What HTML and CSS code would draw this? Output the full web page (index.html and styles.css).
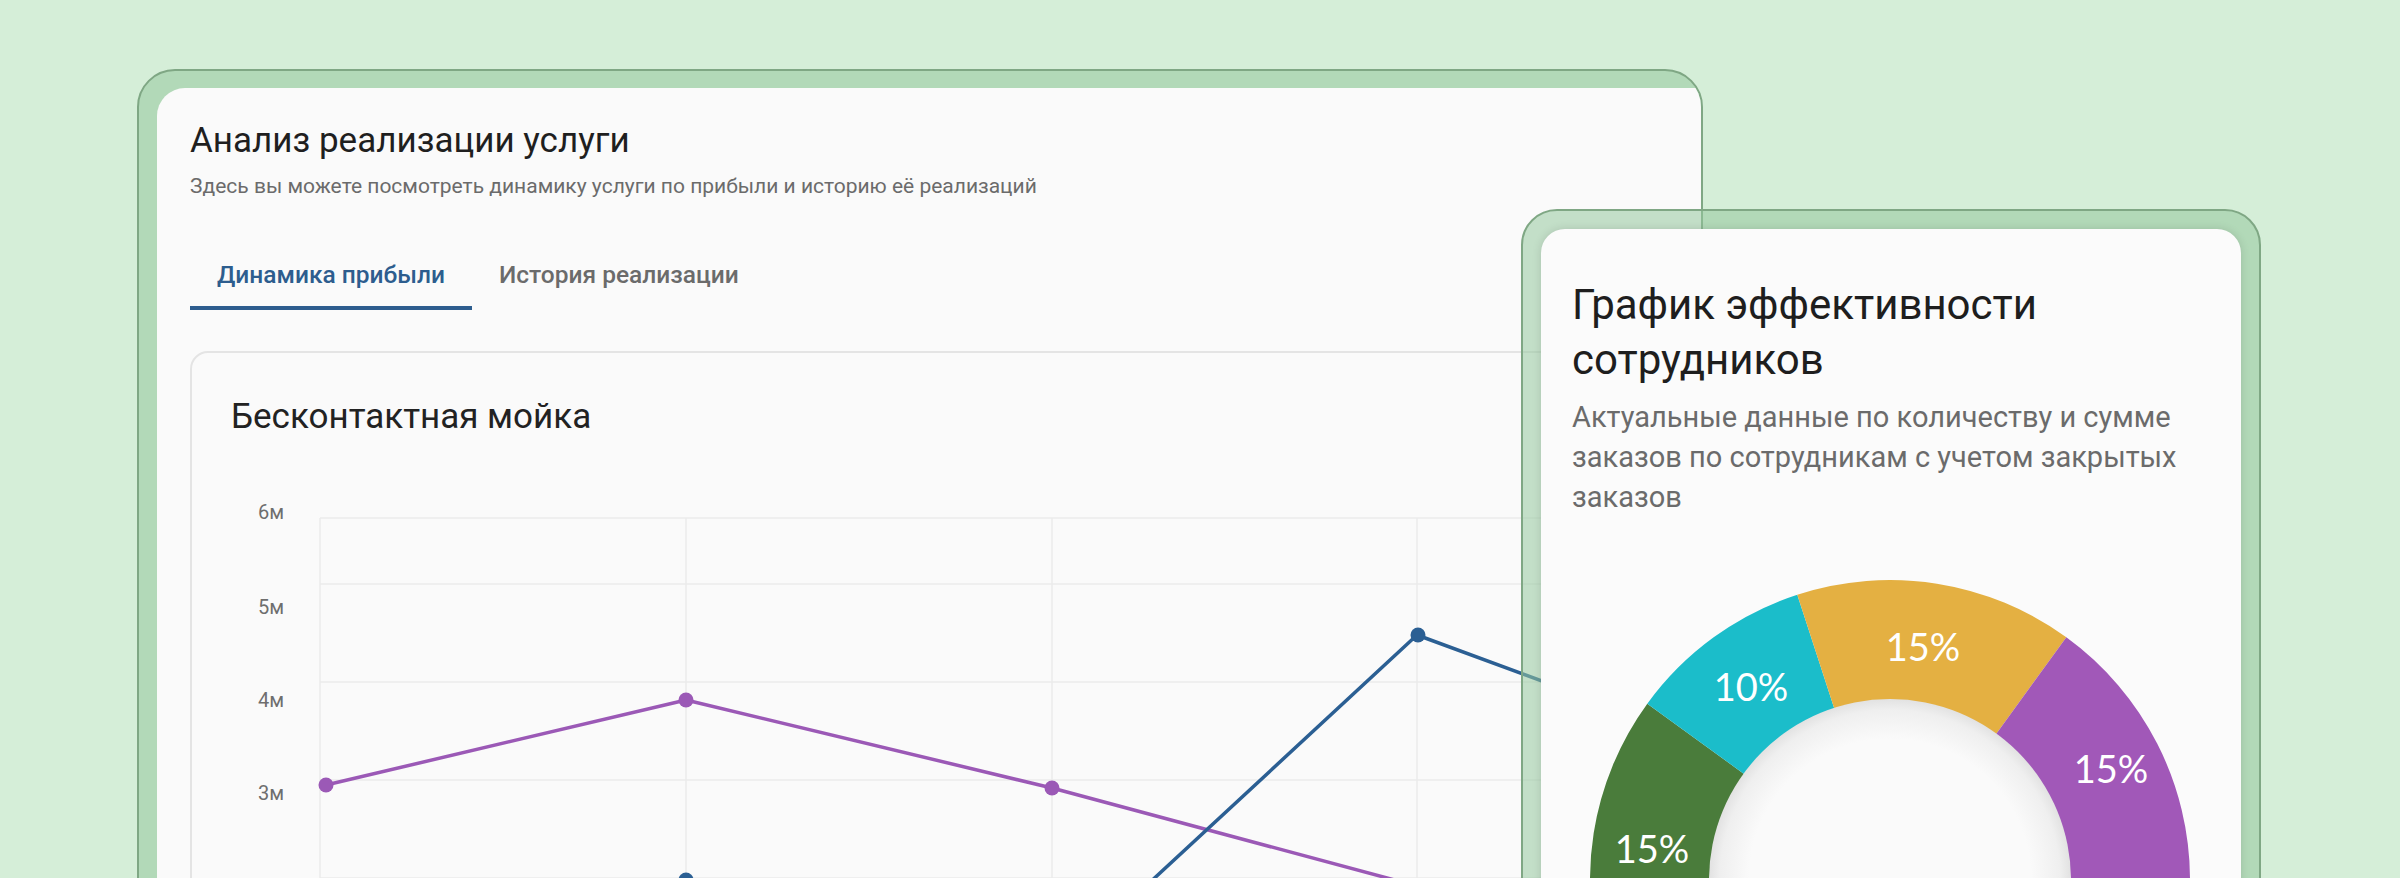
FILE: index.html
```html
<!DOCTYPE html>
<html lang="ru">
<head>
<meta charset="utf-8">
<title>Анализ реализации услуги</title>
<link rel="stylesheet" href="styles.css">
</head>
<body>
<div class="page">
  <section class="frame frame-main">
    <div class="panel panel-main">
      <h1 class="title">Анализ реализации услуги</h1>
      <p class="subtitle">Здесь вы можете посмотреть динамику услуги по прибыли и историю её реализаций</p>
      <nav class="tabs">
        <span class="tab tab-active">Динамика прибыли</span>
        <span class="tab">История реализации</span>
      </nav>
      <div class="chart-card">
        <h2 class="chart-title">Бесконтактная мойка</h2>
        <svg class="chart" width="1474" height="440" viewBox="192 460 1474 440">
          <g class="grid">
            <line x1="320" y1="518" x2="1666" y2="518"/>
            <line x1="320" y1="584" x2="1666" y2="584"/>
            <line x1="320" y1="682" x2="1666" y2="682"/>
            <line x1="320" y1="780" x2="1666" y2="780"/>
            <line x1="320" y1="878" x2="1666" y2="878"/>
            <line x1="320" y1="518" x2="320" y2="900"/>
            <line x1="686" y1="518" x2="686" y2="900"/>
            <line x1="1052" y1="518" x2="1052" y2="900"/>
            <line x1="1417" y1="518" x2="1417" y2="900"/>
          </g>
          <g class="axis">
            <text x="258" y="519">6м</text>
            <text x="258" y="614">5м</text>
            <text x="258" y="707">4м</text>
            <text x="258" y="800">3м</text>
          </g>
          <polyline class="series series-purple" points="326,785 686,700 1052,788 1417,886 1783,900"/>
          <polyline class="series series-blue" points="686,880 1052,973 1417,635 1783,770"/>
          <g class="dots-purple">
            <circle cx="326" cy="785" r="7.5"/>
            <circle cx="686" cy="700" r="7.5"/>
            <circle cx="1052" cy="788" r="7.5"/>
          </g>
          <g class="dots-blue">
            <circle cx="686" cy="880" r="7.5"/>
            <circle cx="1418" cy="635" r="7.5"/>
          </g>
        </svg>
      </div>
    </div>
  </section>

  <section class="frame frame-side">
    <div class="panel panel-side">
      <h2 class="side-title">График эффективности сотрудников</h2>
      <p class="side-desc">Актуальные данные по количеству и сумме заказов по сотрудникам с учетом закрытых заказов</p>
      <svg class="donut" width="638" height="400" viewBox="1572 540 638 400">
        <defs>
          <radialGradient id="hole" cx="50%" cy="50%" r="50%">
            <stop offset="0.78" stop-color="#fafafa"/>
            <stop offset="0.94" stop-color="#efefef"/>
            <stop offset="1" stop-color="#e2e2e2"/>
          </radialGradient>
        </defs>
        <path class="seg-green" d="M1604.68 972.71 A300 300 0 0 1 1647.29 703.66 L1744.38 774.20 A180 180 0 0 0 1718.81 935.62 Z"/>
        <path class="seg-cyan" d="M1647.29 703.66 A300 300 0 0 1 1797.29 594.68 L1834.38 708.81 A180 180 0 0 0 1744.38 774.20 Z"/>
        <path class="seg-yellow" d="M1797.29 594.68 A300 300 0 0 1 2066.34 637.29 L1995.80 734.38 A180 180 0 0 0 1834.38 708.81 Z"/>
        <path class="seg-purple" d="M2066.34 637.29 A300 300 0 0 1 2190 880 L2070 880 A180 180 0 0 0 1995.80 734.38 Z"/>
        <path class="seg-blue" d="M2190 880 A300 300 0 0 1 2066.34 1122.71 L1995.80 1025.62 A180 180 0 0 0 2070 880 Z"/>
        <path class="seg-red" d="M2066.34 1122.71 A300 300 0 0 1 1797.29 1165.32 L1834.38 1051.19 A180 180 0 0 0 1995.80 1025.62 Z"/>
        <path class="seg-grey" d="M1797.29 1165.32 A300 300 0 0 1 1604.68 972.71 L1718.81 935.62 A180 180 0 0 0 1834.38 1051.19 Z"/>
        <circle cx="1890" cy="880" r="181" fill="url(#hole)"/>
        <g class="pct">
          <text x="1923" y="661">15%</text>
          <text x="1751" y="701">10%</text>
          <text x="2111" y="783">15%</text>
          <text x="1652" y="863">15%</text>
        </g>
      </svg>
    </div>
  </section>
</div>
</body>
</html>
```

FILE: styles.css
```css
html, body {
  margin: 0;
  height: 878px;
  overflow: hidden;
}

body {
  background: #d5eed8;
  font-family: Roboto, "Liberation Sans", sans-serif;
}

.page {
  position: relative;
  padding: 69px 0 0 137px;
}

.frame {
  box-sizing: border-box;
  border: 2px solid #7fa784;
  background: rgba(150, 200, 158, 0.55);
  overflow: hidden;
}

.frame-main {
  width: 1566px;
  height: 860px;
  border-radius: 38px;
  padding: 17px 0 0 18px;
}

.panel {
  box-sizing: border-box;
  height: 100%;
}

.panel-main {
  background: #fafafa;
  border-top-left-radius: 28px;
  padding: 32px 33px 0 33px;
}

.title {
  margin: 0;
  font-size: 35px;
  line-height: 42px;
  font-weight: 400;
  color: #1f1f1f;
}

.subtitle {
  margin: 11px 0 0;
  font-size: 21px;
  line-height: 26px;
  color: #6b6b6b;
}

.tabs {
  display: flex;
  margin-top: 45px;
}

.tab {
  padding: 16px 27px;
  font-size: 24.5px;
  line-height: 30px;
  font-weight: 500;
  color: #6b6b6b;
  border-bottom: 4px solid transparent;
}

.tab-active {
  color: #2d5d8e;
  border-bottom-color: #2d5d8e;
}

.chart-card {
  margin-top: 41px;
  height: 600px;
  border: 2px solid #e4e4e4;
  border-radius: 18px;
  background: #fafafa;
}

.chart-title {
  margin: 0;
  padding: 44px 0 0 39px;
  font-size: 35px;
  line-height: 40px;
  font-weight: 400;
  color: #222222;
}

.chart {
  display: block;
  margin-top: 23px;
}

.grid line {
  stroke: #ebebeb;
  stroke-width: 1.5;
}

.axis text {
  font-family: Roboto, "Liberation Sans", sans-serif;
  font-size: 20px;
  fill: #6e6e6e;
}

.series {
  fill: none;
  stroke-width: 3.5;
  stroke-linejoin: round;
}

.series-purple {
  stroke: #9b59b6;
}

.series-blue {
  stroke: #2b5f93;
}

.dots-purple circle {
  fill: #9b59b6;
}

.dots-blue circle {
  fill: #2b5f93;
}

.frame-side {
  position: absolute;
  left: 1521px;
  top: 209px;
  width: 740px;
  height: 720px;
  border-radius: 36px;
  padding: 18px;
}

.panel-side {
  background: #fbfbfb;
  border-radius: 24px;
  padding: 48px 31px 0;
  box-shadow: 0 0 10px rgba(0, 0, 0, 0.13);
}

.side-title {
  margin: 0;
  font-size: 42px;
  line-height: 55px;
  font-weight: 400;
  color: #1e1e1e;
}

.side-desc {
  margin: 10px 0 0;
  font-size: 29px;
  line-height: 40px;
  color: #6b6b6b;
}

.donut {
  display: block;
  margin-top: 23px;
}

.seg-green { fill: #4a7c3b; }
.seg-cyan { fill: #1bbdca; }
.seg-yellow { fill: #e4b042; }
.seg-purple { fill: #a158b8; }
.seg-blue { fill: #2b5f93; }
.seg-red { fill: #d9534f; }
.seg-grey { fill: #9aa5ad; }

.pct text {
  font-family: Lato, "Open Sans", sans-serif;
  font-size: 38px;
  fill: #ffffff;
  text-anchor: middle;
}
```
